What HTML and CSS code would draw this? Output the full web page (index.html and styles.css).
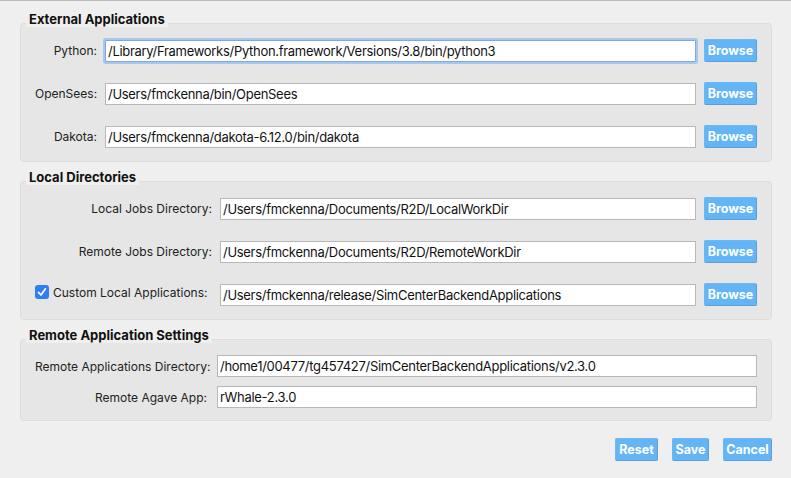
FILE: index.html
```html
<!DOCTYPE html>
<html>
<head>
<meta charset="utf-8">
<link rel="stylesheet" href="styles.css">
</head>
<body>
<div class="page">
  <section class="group">
    <div class="title">External Applications</div>
    <div class="box rows g1">
      <div class="row">
        <label class="lbl">Python:</label>
        <div class="field focus">/Library/Frameworks/Python.framework/Versions/3.8/bin/python3</div>
        <button class="btn browse">Browse</button>
      </div>
      <div class="row">
        <label class="lbl">OpenSees:</label>
        <div class="field">/Users/fmckenna/bin/OpenSees</div>
        <button class="btn browse">Browse</button>
      </div>
      <div class="row">
        <label class="lbl">Dakota:</label>
        <div class="field">/Users/fmckenna/dakota-6.12.0/bin/dakota</div>
        <button class="btn browse">Browse</button>
      </div>
    </div>
  </section>

  <section class="group">
    <div class="title">Local Directories</div>
    <div class="box rows g2">
      <div class="row">
        <label class="lbl">Local Jobs Directory:</label>
        <div class="field">/Users/fmckenna/Documents/R2D/LocalWorkDir</div>
        <button class="btn browse">Browse</button>
      </div>
      <div class="row">
        <label class="lbl">Remote Jobs Directory:</label>
        <div class="field">/Users/fmckenna/Documents/R2D/RemoteWorkDir</div>
        <button class="btn browse">Browse</button>
      </div>
      <div class="row">
        <label class="lbl check-lbl"><span class="checkbox"><svg viewBox="0 0 14 14" width="14" height="14"><path d="M3.6 7.4 L6 10 L10.4 3.8" fill="none" stroke="#fff" stroke-width="1.7" stroke-linecap="round" stroke-linejoin="round"/></svg></span><span class="check-text">Custom Local Applications:</span></label>
        <div class="field">/Users/fmckenna/release/SimCenterBackendApplications</div>
        <button class="btn browse">Browse</button>
      </div>
    </div>
  </section>

  <section class="group">
    <div class="title">Remote Application Settings</div>
    <div class="box rows g3">
      <div class="row">
        <label class="lbl">Remote Applications Directory:</label>
        <div class="field">/home1/00477/tg457427/SimCenterBackendApplications/v2.3.0</div>
      </div>
      <div class="row">
        <label class="lbl">Remote Agave App:</label>
        <div class="field">rWhale-2.3.0</div>
      </div>
    </div>
  </section>

  <div class="actions">
    <button class="btn reset">Reset</button>
    <button class="btn save">Save</button>
    <button class="btn cancel">Cancel</button>
  </div>
</div>
</body>
</html>
```
FILE: styles.css
```css
html, body {
  margin: 0;
  padding: 0;
}
body {
  width: 791px;
  height: 478px;
  background: #efefef;
  border-top: 1px solid #b9b9b9;
  box-sizing: border-box;
  overflow: hidden;
  font-family: "Inter", "Liberation Sans", sans-serif;
  font-size: 12px;
  color: #1f1f1f;
}
.page {
  padding: 8px 19px 0 20px;
}
.group {
  display: flex;
  flex-direction: column;
  align-items: flex-start;
}
.group + .group {
  margin-top: 5px;
}
.title {
  position: relative;
  z-index: 1;
  margin-left: 6px;
  padding: 2px 3px 0 3px;
  height: 16px;
  line-height: 16px;
  margin-bottom: -4px;
  background: #efefef;
  font-weight: 700;
  font-size: 13px;
  color: #111;
}
.box {
  align-self: stretch;
  background: #e6e6e6;
  border: 1px solid #dcdcdc;
  border-radius: 4px;
  padding: 15px 14px 13px 14px;
}
.rows {
  display: flex;
  flex-direction: column;
  gap: 20px;
}
.row {
  display: flex;
  align-items: center;
  height: 23px;
  gap: 8px;
}
.lbl {
  flex: none;
  text-align: right;
  white-space: nowrap;
  color: #222;
}
.g1 .lbl { width: 62px; }
.g2 .lbl { width: 177px; }
.g3 { gap: 9px; padding-bottom: 12px; }
.g3 .row { height: 22px; gap: 10px; }
.g3 .lbl { width: 172px; }

.field {
  flex: 1;
  height: 22px;
  box-sizing: border-box;
  background: #fff;
  border: 1px solid #b8b8b8;
  padding: 0 2px;
  line-height: 20px;
  white-space: nowrap;
  overflow: hidden;
  color: #111;
  font-size: 13px;
  letter-spacing: -0.3px;
}
.field.focus {
  border-color: #7ea7e3;
  box-shadow: 0 0 0 2px #a9c6ef;
  border-radius: 1px;
}
.btn {
  font-family: "Inter", "Liberation Sans", sans-serif;
  font-weight: 700;
  font-size: 12.5px;
  color: #fff;
  background: #64b5f6;
  border: 1px solid #5a9fd8;
  border-top-color: #6cb8f4;
  border-left-color: #6cb8f4;
  border-radius: 2px;
  height: 23px;
  padding: 0;
  box-sizing: border-box;
  flex: none;
  cursor: default;
}
.browse { width: 53px; }

.check-lbl {
  display: flex;
  align-items: center;
  justify-content: flex-start;
  margin-top: -5px;
}
.checkbox {
  width: 14px;
  height: 14px;
  border-radius: 3px;
  background: #2f7ff4;
  display: inline-flex;
  flex: none;
}
.check-text {
  margin-left: 4px;
}

.actions {
  display: flex;
  justify-content: flex-end;
  gap: 14px;
  margin-top: 17px;
}
.reset { width: 43px; }
.save { width: 37px; }
.cancel { width: 49px; }
```
